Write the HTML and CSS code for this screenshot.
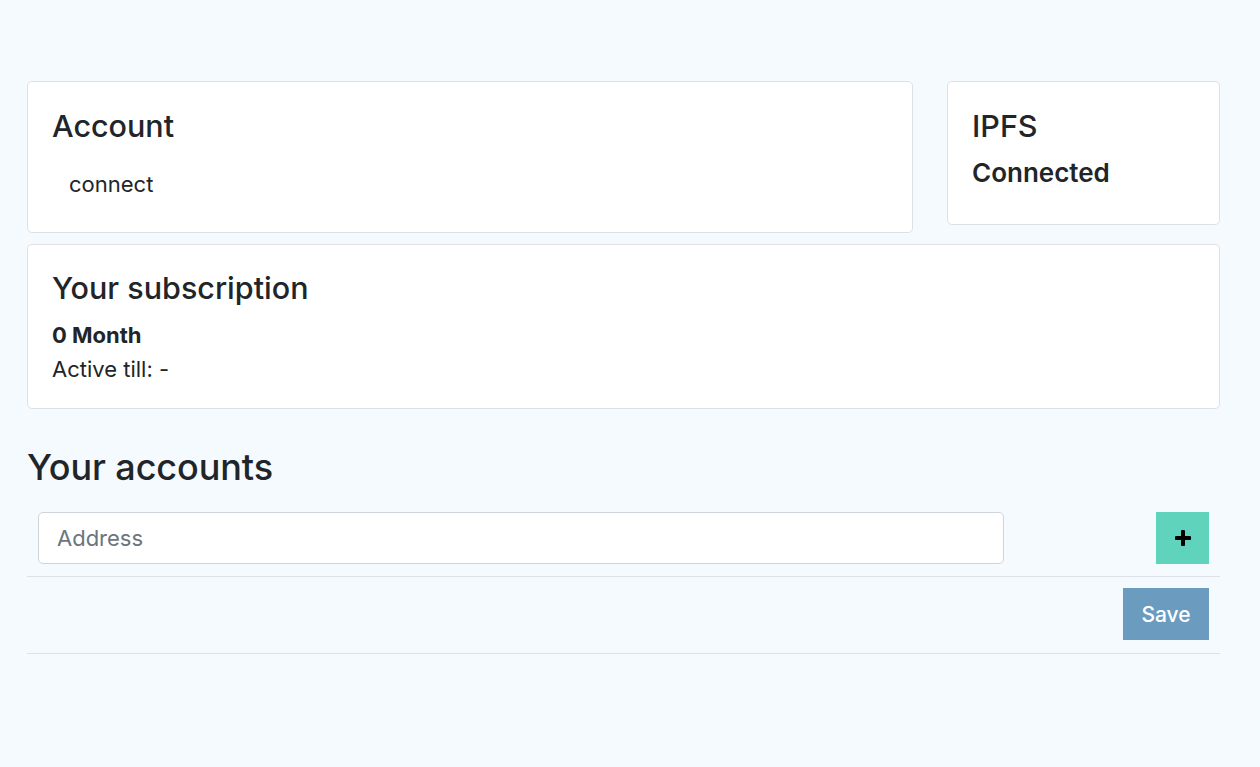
FILE: index.html
```html
<!DOCTYPE html>
<html lang="en">
<head>
<meta charset="utf-8">
<title>Dashboard</title>
<link rel="stylesheet" href="styles.css">
</head>
<body>
<main class="page">
  <div class="top-row">
    <section class="card card-account">
      <h3 class="card-title">Account</h3>
      <div class="connect">connect</div>
    </section>
    <section class="card card-ipfs">
      <h3 class="card-title">IPFS</h3>
      <div class="status">Connected</div>
    </section>
  </div>
  <section class="card card-sub">
    <h3 class="card-title">Your subscription</h3>
    <div class="sub-months">0 Month</div>
    <div class="sub-line">Active till: -</div>
  </section>
  <h2 class="section-title">Your accounts</h2>
  <div class="acc-row">
    <input class="addr" type="text" placeholder="Address">
    <button class="btn-add" type="button" aria-label="Add">
      <svg width="16" height="16" viewBox="0 0 16 16"><path d="M8 1.5v13M1.5 8h13" stroke="#000" stroke-width="4" stroke-linecap="round"/></svg>
    </button>
  </div>
  <div class="save-row">
    <button class="btn-save" type="button">Save</button>
  </div>
</main>
</body>
</html>
```
FILE: styles.css
```css
* { box-sizing: border-box; }
html, body { margin: 0; padding: 0; }
body {
  background: #f5fafe;
  font-family: Inter, "Noto Sans", "Liberation Sans", sans-serif;
  color: #212529;
  width: 1260px;
  height: 767px;
  overflow: hidden;
}
.page {
  padding: 81px 40px 0 27px;
  width: 1260px;
}
.top-row {
  display: flex;
  align-items: flex-start;
  gap: 34px;
}
.card {
  background: #fff;
  border: 1px solid #dde1e5;
  border-radius: 5px;
  padding: 26px 24px 0 24px;
}
.card-account { flex: 1; height: 152px; }
.card-ipfs { width: 273px; height: 144px; }
.card-title {
  margin: 0;
  font-size: 30.5px;
  line-height: 36px;
  font-weight: 500;
}
.connect {
  margin: 26px 0 0 17px;
  font-size: 22px;
  line-height: 28px;
}
.status {
  margin-top: 13px;
  font-size: 26px;
  line-height: 32px;
  font-weight: 600;
}
.card-sub {
  margin-top: 11px;
  height: 165px;
  padding-top: 25px;
}
.sub-months {
  margin-top: 12px;
  font-size: 22px;
  line-height: 34px;
  font-weight: 700;
}
.sub-line {
  font-size: 22px;
  line-height: 34px;
}
.section-title {
  margin: 37px 0 0 0;
  font-size: 36px;
  line-height: 43px;
  font-weight: 500;
  letter-spacing: -0.1px;
}
.acc-row {
  margin-top: 23px;
  display: grid;
  grid-template-columns: 966px 1fr;
  align-items: center;
  padding: 0 11px 12px 11px;
  border-bottom: 1px solid #dde2e6;
}
.addr {
  height: 52px;
  border: 1px solid #ced4da;
  border-radius: 5px;
  background: #fff;
  padding: 0 18px;
  font-family: inherit;
  font-size: 22px;
  color: #212529;
  outline: none;
}
.addr::placeholder { color: #6c757d; }
.btn-add {
  justify-self: end;
  width: 53px;
  height: 52px;
  border: 0;
  background: #5fd3bc;
  display: flex;
  align-items: center;
  justify-content: center;
  padding: 0;
}
.save-row {
  display: flex;
  justify-content: flex-end;
  padding: 11px 11px 13px 11px;
  border-bottom: 1px solid #dde2e6;
}
.btn-save {
  width: 86px;
  height: 52px;
  border: 0;
  background: #6b9bbf;
  color: #fff;
  font-family: inherit;
  font-size: 21px;
  font-weight: 500;
}
```
